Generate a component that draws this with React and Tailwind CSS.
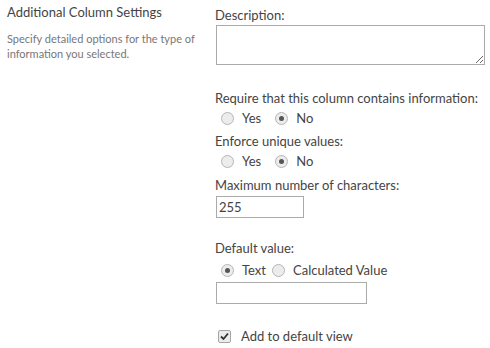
import React, { useState } from 'react';

const Radio = ({ checked, label, onClick, className = '' }) => (
    <label onClick={onClick} className={`flex items-center cursor-pointer ${className}`}>
        <span className="w-[13px] h-[13px] rounded-full border border-[#b5b5b5] bg-[#ececec] flex items-center justify-center">
            {checked && <span className="w-[5px] h-[5px] rounded-full bg-[#555]" />}
        </span>
        <span className="ml-[8px]">{label}</span>
    </label>
);

const App = () => {
    const [required, setRequired] = useState('no');
    const [unique, setUnique] = useState('no');
    const [defType, setDefType] = useState('text');
    const [addView, setAddView] = useState(true);

    return (
        <div
            className="w-[490px] h-[348px] bg-white flex text-[#444] text-[13px] leading-[18px] whitespace-nowrap"
            style={{ fontFamily: 'Lato, "Open Sans", sans-serif' }}
        >
            {/* Left section description */}
            <div className="w-[215px] pl-[7px] pt-[3px] shrink-0">
                <div className="text-[13px] text-[#444]">Additional Column Settings</div>
                <div className="mt-[10px] text-[11px] leading-[15px] text-[#777]">
                    <div>Specify detailed options for the type of</div>
                    <div>information you selected.</div>
                </div>
            </div>

            {/* Right section fields */}
            <div className="flex-1 pt-[6px]">
                <div>Description:</div>
                <textarea className="block w-[269px] h-[40px] border border-[#ababab] mt-[1px] ml-[1px] outline-none" />

                <div className="mt-[24px]">Require that this column contains information:</div>
                <div className="flex items-center h-[22px] pl-[6px]">
                    <Radio checked={required === 'yes'} label="Yes" onClick={() => setRequired('yes')} />
                    <Radio checked={required === 'no'} label="No" onClick={() => setRequired('no')} className="ml-[14px]" />
                </div>

                <div className="mt-[3px]">Enforce unique values:</div>
                <div className="flex items-center h-[22px] pl-[6px]">
                    <Radio checked={unique === 'yes'} label="Yes" onClick={() => setUnique('yes')} />
                    <Radio checked={unique === 'no'} label="No" onClick={() => setUnique('no')} className="ml-[14px]" />
                </div>

                <div className="mt-[4px]">Maximum number of characters:</div>
                <input
                    defaultValue="255"
                    className="block w-[88px] h-[22px] mt-[2px] border border-[#ababab] ml-[1px] px-[2px] outline-none"
                />

                <div className="mt-[21px]">Default value:</div>
                <div className="flex items-center h-[22px] mt-[2px] pl-[6px]">
                    <Radio checked={defType === 'text'} label="Text" onClick={() => setDefType('text')} />
                    <Radio checked={defType === 'calc'} label="Calculated Value" onClick={() => setDefType('calc')} className="ml-[6px]" />
                </div>
                <input className="block w-[151px] h-[22px] mt-[1px] border border-[#ababab] ml-[1px] outline-none" />

                <label className="flex items-center h-[18px] mt-[23px] ml-[3px] cursor-pointer" onClick={() => setAddView(!addView)}>
                    <span className="w-[13px] h-[13px] border border-[#a5a5a5] bg-[#ececec] rounded-[2px] flex items-center justify-center">
                        {addView && (
                            <svg width="9" height="9" viewBox="0 0 9 9">
                                <path d="M1 4.5 L3.5 7 L8 1.5" stroke="#333" strokeWidth="1.8" fill="none" />
                            </svg>
                        )}
                    </span>
                    <span className="ml-[10px]">Add to default view</span>
                </label>
            </div>
        </div>
    );
};

export default App;
